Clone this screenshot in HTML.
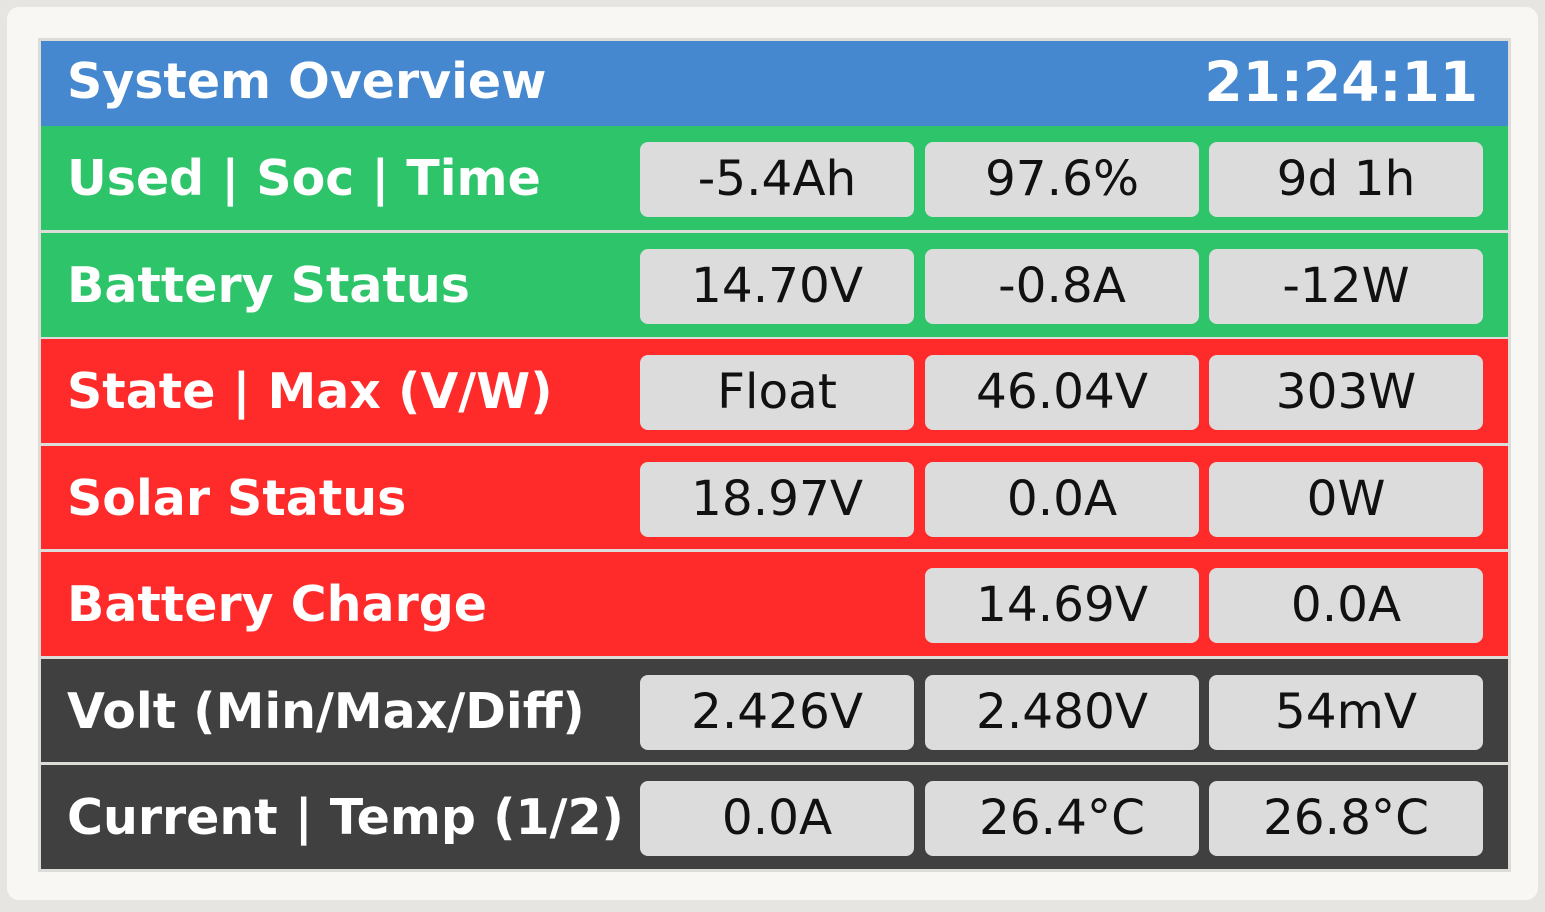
<!DOCTYPE html><html><head><style>
*{margin:0;padding:0;box-sizing:border-box}
body{width:1545px;height:912px;background:#e6e5e1;font-family:"DejaVu Sans","Liberation Sans",sans-serif;position:relative;overflow:hidden}
.panel{position:absolute;left:7px;top:7px;width:1531px;height:893px;background:#f8f7f3;border-radius:12px}
.scr{position:absolute;left:38px;top:38px;width:1473px;height:834px;background:#dcdcd8}
.r{position:absolute;left:41px;width:1467px;color:#fff;font-weight:bold;font-size:49px}
.r .l{position:absolute;left:26px;top:0;line-height:106px;white-space:nowrap}
.b{position:absolute;top:16px;height:75px;width:274px;background:#dcdcdc;border-radius:8px;color:#111;font-weight:normal;font-size:48.5px;text-align:center;line-height:75px}
.b1{left:599px}.b2{left:884px}.b3{left:1168px}
.g{background:#2ec46a}.red{background:#ff2a2a}.d{background:#404040}
</style></head><body>
<div class="panel"></div>
<div class="scr"></div>
<div class="r" style="top:41px;height:85px;background:#4588d0"><div class="l" style="line-height:82px">System Overview</div><div style="position:absolute;right:30px;top:0;line-height:82px;font-size:55px">21:24:11</div></div>
<div class="r g" style="top:126px;height:104px"><div class="l">Used | Soc | Time</div><div class="b b1">-5.4Ah</div><div class="b b2">97.6%</div><div class="b b3">9d 1h</div></div>
<div class="r g" style="top:233px;height:104px"><div class="l">Battery Status</div><div class="b b1">14.70V</div><div class="b b2">-0.8A</div><div class="b b3">-12W</div></div>
<div class="r red" style="top:339px;height:104px"><div class="l">State | Max (V/W)</div><div class="b b1">Float</div><div class="b b2">46.04V</div><div class="b b3">303W</div></div>
<div class="r red" style="top:446px;height:103px"><div class="l">Solar Status</div><div class="b b1">18.97V</div><div class="b b2">0.0A</div><div class="b b3">0W</div></div>
<div class="r red" style="top:552px;height:104px"><div class="l">Battery Charge</div><div class="b b2">14.69V</div><div class="b b3">0.0A</div></div>
<div class="r d" style="top:659px;height:103px"><div class="l">Volt (Min/Max/Diff)</div><div class="b b1">2.426V</div><div class="b b2">2.480V</div><div class="b b3">54mV</div></div>
<div class="r d" style="top:765px;height:104px"><div class="l">Current | Temp (1/2)</div><div class="b b1">0.0A</div><div class="b b2">26.4°C</div><div class="b b3">26.8°C</div></div>
</body></html>
